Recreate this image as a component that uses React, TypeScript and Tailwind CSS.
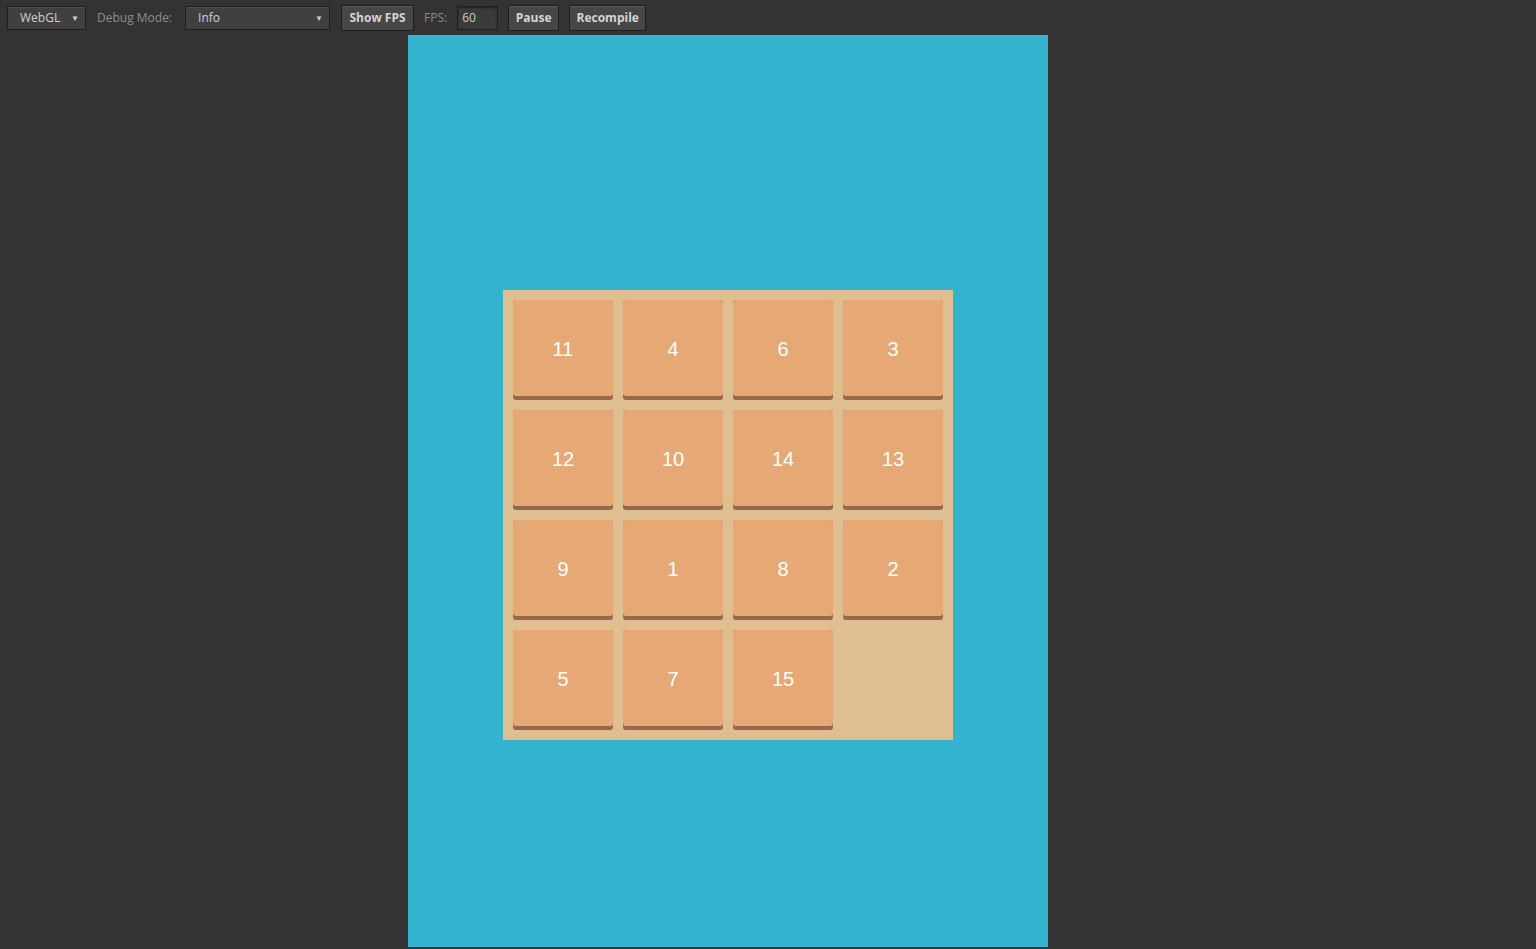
const tiles = [11, 4, 6, 3, 12, 10, 14, 13, 9, 1, 8, 2, 5, 7, 15, 0];

function Select({ label, width }: { label: string; width: string }) {
  return (
    <div
      className={`flex h-[24px] ${width} items-center justify-between border border-[#1f1f1f] bg-[#404040] pl-[12px] pr-[6px] text-[12px] text-[#d0d0d0] shadow-[inset_0_1px_0_rgba(255,255,255,0.08)]`}
    >
      <span>{label}</span>
      <span className="text-[8px] text-[#cfcfcf]">▼</span>
    </div>
  );
}

function Button({ label, width }: { label: string; width: string }) {
  return (
    <div
      className={`flex h-[26px] ${width} items-center justify-center border border-[#1f1f1f] bg-[#474747] text-[12px] font-bold text-[#d4d4d4] shadow-[inset_0_1px_0_rgba(255,255,255,0.1)]`}
    >
      {label}
    </div>
  );
}

export default function App() {
  return (
    <div className="flex h-[949px] w-[1536px] flex-col bg-[#333333] font-['Open_Sans','Liberation_Sans',sans-serif]">
      <div className="flex h-[35px] items-center pl-[7px]">
        <Select label="WebGL" width="w-[79px]" />
        <span className="ml-[11px] text-[12px] text-[#8c8c8c]">Debug Mode:</span>
        <div className="ml-[13px]">
          <Select label="Info" width="w-[145px]" />
        </div>
        <div className="ml-[11px]">
          <Button label="Show FPS" width="w-[73px]" />
        </div>
        <span className="ml-[10px] text-[12px] text-[#8c8c8c]">FPS:</span>
        <div className="ml-[10px] flex h-[24px] w-[41px] items-center border border-[#1f1f1f] bg-[#3a3a3a] pl-[4px] text-[12px] text-[#c8c8c8] shadow-[inset_0_1px_2px_rgba(0,0,0,0.4)]">
          60
        </div>
        <div className="ml-[10px]">
          <Button label="Pause" width="w-[51px]" />
        </div>
        <div className="ml-[10px]">
          <Button label="Recompile" width="w-[77px]" />
        </div>
      </div>
      <div className="ml-[408px] flex h-[912px] w-[640px] items-center justify-center bg-[#33b3cd]">
        <div className="mt-[48px] grid grid-cols-4 gap-[10px] bg-[#dfbf91] p-[10px] font-['Liberation_Sans',Arial,sans-serif]">
          {tiles.map((n, i) =>
            n === 0 ? (
              <div key={i} className="h-[100px] w-[100px]" />
            ) : (
              <div
                key={i}
                className="flex h-[100px] w-[100px] flex-col rounded-[3px] bg-[#96694a]"
              >
                <div className="flex h-[96px] items-center justify-center rounded-[3px] bg-[#e6a874] pt-[2px] text-[20px] text-white">
                  {n}
                </div>
              </div>
            )
          )}
        </div>
      </div>
    </div>
  );
}
